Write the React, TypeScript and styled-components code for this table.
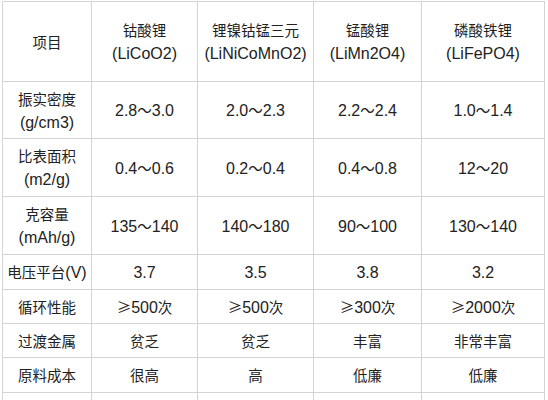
import React from 'react'
import styled, { createGlobalStyle } from 'styled-components'

const GlobalStyle = createGlobalStyle`
  html, body {
    margin: 0;
    padding: 0;
    background: #fff;
    overflow: hidden;
  }
`

const Page = styled.div`
  width: 548px;
  height: 400px;
  overflow: hidden;
  padding: 1px 0 0 2px;
  box-sizing: border-box;
`

const Table = styled.table`
  border-collapse: collapse;
  table-layout: fixed;
  width: 543px;
  font-family: "Liberation Sans", "Noto Sans CJK SC", sans-serif;
  font-size: 16px;
  color: #222;
  td {
    border: 1px solid #d4d4d4;
    text-align: center;
    vertical-align: middle;
    padding: 0;
    line-height: 23px;
  }
`

const Row = styled.tr<{ $h: number }>`
  height: ${p => p.$h}px;
`

const Cjk = styled.span`
  font-family: "Noto Sans CJK SC", sans-serif;
  font-size: 14.5px;
`

const widths = [89, 106, 116, 108, 123]

const rows: { h: number; cells: string[][] }[] = [
  { h: 80, cells: [['项目'], ['钴酸锂', '(LiCoO2)'], ['锂镍钴锰三元', '(LiNiCoMnO2)'], ['锰酸锂', '(LiMn2O4)'], ['磷酸铁锂', '(LiFePO4)']] },
  { h: 57, cells: [['振实密度', '(g/cm3)'], ['2.8～3.0'], ['2.0～2.3'], ['2.2～2.4'], ['1.0～1.4']] },
  { h: 58, cells: [['比表面积', '(m2/g)'], ['0.4～0.6'], ['0.2～0.4'], ['0.4～0.8'], ['12～20']] },
  { h: 58, cells: [['克容量', '(mAh/g)'], ['135～140'], ['140～180'], ['90～100'], ['130～140']] },
  { h: 35, cells: [['电压平台(V)'], ['3.7'], ['3.5'], ['3.8'], ['3.2']] },
  { h: 34, cells: [['循环性能'], ['≥500次'], ['≥500次'], ['≥300次'], ['≥2000次']] },
  { h: 34, cells: [['过渡金属'], ['贫乏'], ['贫乏'], ['丰富'], ['非常丰富']] },
  { h: 35, cells: [['原料成本'], ['很高'], ['高'], ['低廉'], ['低廉']] },
  { h: 35, cells: [[''], [''], [''], [''], ['']] },
]

// chinese characters render a little smaller than the latin digits in the source
const cjkRun = /([\u4e00-\u9fff≥～]+)/
const Line = ({ text }: { text: string }) => {
  const parts = text.split(cjkRun).filter(Boolean)
  return (
    <div>
      {parts.map((p, i) =>
        /[\u4e00-\u9fff≥～]/.test(p) ? <Cjk key={i}>{p}</Cjk> : <React.Fragment key={i}>{p}</React.Fragment>
      )}
    </div>
  )
}

export default function App() {
  return (
    <>
      <GlobalStyle />
      <Page>
        <Table>
          <colgroup>
            {widths.map((w, i) => <col key={i} style={{ width: w }} />)}
          </colgroup>
          <tbody>
            {rows.map((r, i) => (
              <Row key={i} $h={r.h}>
                {r.cells.map((c, j) => (
                  <td key={j}>
                    {c.map((line, k) => <Line key={k} text={line} />)}
                  </td>
                ))}
              </Row>
            ))}
          </tbody>
        </Table>
      </Page>
    </>
  )
}
